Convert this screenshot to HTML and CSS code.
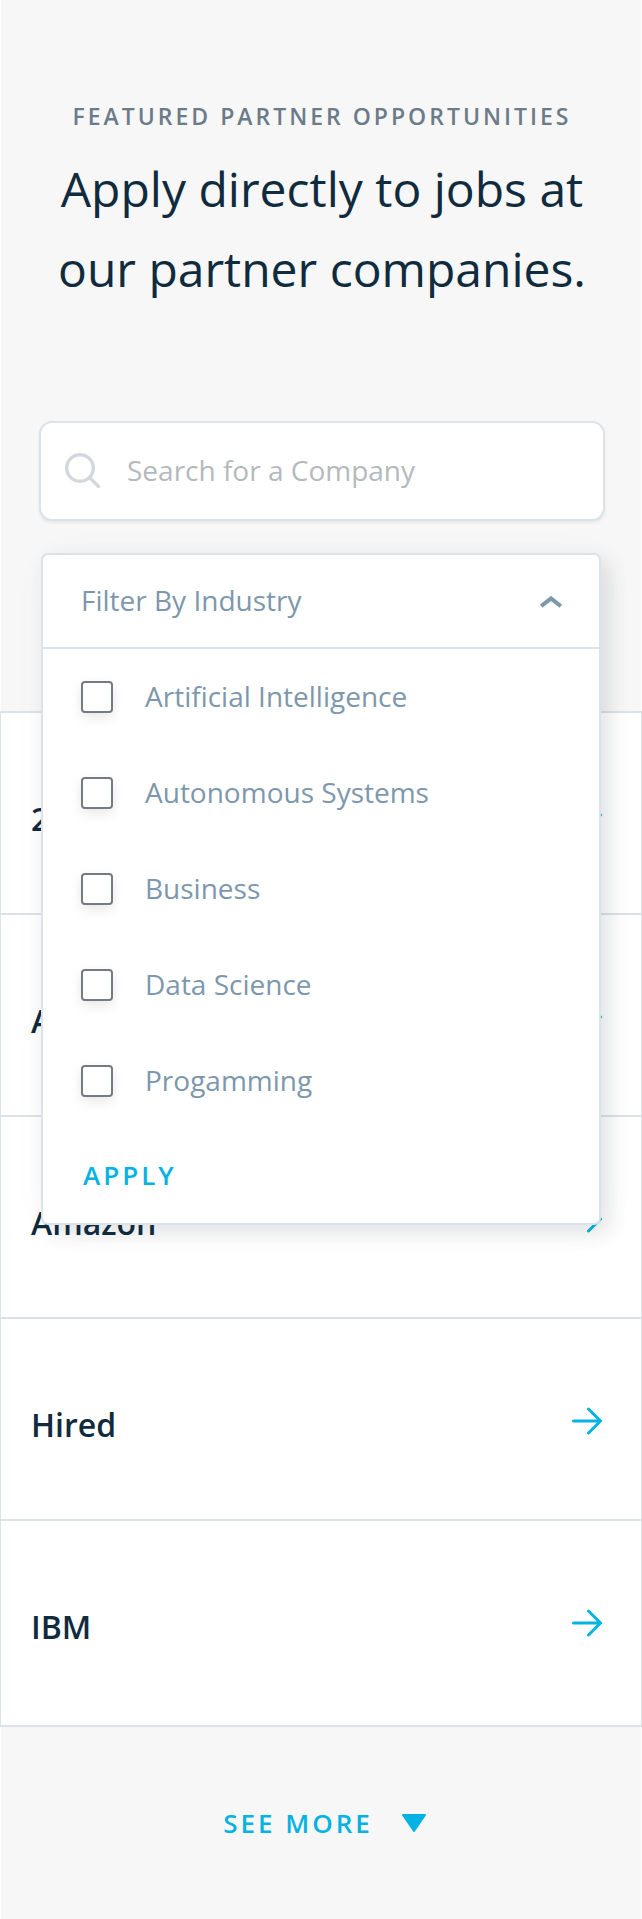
FILE: index.html
```html
<!DOCTYPE html>
<html lang="en">
<head>
<meta charset="utf-8">
<meta name="viewport" content="width=device-width, initial-scale=1">
<title>Featured Partner Opportunities</title>
<link rel="stylesheet" href="styles.css">
</head>
<body>
<svg class="sprite" aria-hidden="true">
  <symbol id="arrow" viewBox="0 0 30 28">
    <path d="M1.5 14H28M16.5 2L28.5 14L16.5 26" fill="none" stroke="currentColor" stroke-width="3" stroke-linecap="round" stroke-linejoin="round"/>
  </symbol>
</svg>
<main class="page">
  <section class="hero">
    <p class="eyebrow">Featured Partner Opportunities</p>
    <h1 class="title">Apply directly to jobs at our partner companies.</h1>
    <div class="search">
      <svg class="search-icon" viewBox="0 0 36 36" aria-hidden="true">
        <circle cx="15" cy="15" r="13.3" fill="none" stroke="currentColor" stroke-width="3.4"/>
        <path d="M25 25L33.5 33.5" fill="none" stroke="currentColor" stroke-width="3.4" stroke-linecap="round"/>
      </svg>
      <input class="search-input" type="search" placeholder="Search for a Company" aria-label="Search for a Company">
    </div>
    <div class="filter">
      <div class="filter-panel">
        <button class="filter-toggle" type="button" aria-expanded="true" aria-controls="industries">
          <span class="label">Filter By Industry</span>
          <svg class="chevron" viewBox="0 0 22 12" aria-hidden="true"><path d="M1.2 10.2L11 2.4L20.8 10.2" fill="none" stroke="currentColor" stroke-width="4"/></svg>
        </button>
        <form id="industries">
          <label class="option"><input class="box" type="checkbox"><span class="label">Artificial Intelligence</span></label>
          <label class="option"><input class="box" type="checkbox"><span class="label">Autonomous Systems</span></label>
          <label class="option"><input class="box" type="checkbox"><span class="label">Business</span></label>
          <label class="option"><input class="box" type="checkbox"><span class="label">Data Science</span></label>
          <label class="option"><input class="box" type="checkbox"><span class="label">Progamming</span></label>
          <button class="apply" type="button">Apply</button>
        </form>
      </div>
    </div>
  </section>
  <nav class="companies" aria-label="Partner companies">
    <a class="company" href="#"><span>2U</span><svg class="arrow" aria-hidden="true"><use href="#arrow"/></svg></a>
    <a class="company" href="#"><span>AT&amp;T</span><svg class="arrow" aria-hidden="true"><use href="#arrow"/></svg></a>
    <a class="company" href="#"><span>Amazon</span><svg class="arrow" aria-hidden="true"><use href="#arrow"/></svg></a>
    <a class="company" href="#"><span>Hired</span><svg class="arrow" aria-hidden="true"><use href="#arrow"/></svg></a>
    <a class="company" href="#"><span>IBM</span><svg class="arrow" aria-hidden="true"><use href="#arrow"/></svg></a>
  </nav>
  <div class="more">
    <button class="more-button" type="button">See More
      <svg class="triangle" viewBox="0 0 24 18" aria-hidden="true"><path d="M1 1H23L12 17Z" fill="currentColor" stroke="currentColor" stroke-width="2" stroke-linejoin="round"/></svg>
    </button>
  </div>
</main>
</body>
</html>
```
FILE: styles.css
```css
* { box-sizing: border-box; }

body {
  margin: 0;
  background: #fff;
  color: #0f2b3d;
  font-family: "Open Sans", "Noto Sans", sans-serif;
}

button, input { font-family: inherit; }
button { border: 0; background: none; cursor: pointer; }

.sprite { position: absolute; width: 0; height: 0; }

.page { background: #f7f7f7; }

.hero {
  padding: 100px 36px 62px 38px;
  border: solid #fff;
  border-width: 0 1px;
}

.eyebrow {
  margin: 0 0 17px;
  color: #6b7b8a;
  font-size: 23px;
  font-weight: 600;
  line-height: 32px;
  letter-spacing: 3px;
  text-align: center;
  text-transform: uppercase;
}

.title {
  max-width: 560px;
  margin: 0 auto 112px;
  font-size: 48px;
  font-weight: 400;
  line-height: 80px;
  text-align: center;
}

.search {
  display: flex;
  align-items: center;
  gap: 26px;
  height: 100px;
  padding: 0 24px;
  border: 2px solid #dbe2e8;
  border-radius: 13px;
  background: #fff;
  box-shadow: 0 2px 3px rgba(46, 61, 73, 0.08);
}

.search-icon { flex: none; width: 36px; height: 36px; color: #d2d8dd; }

.search-input {
  flex: 1;
  min-width: 0;
  padding: 0 0 2px;
  border: 0;
  outline: 0;
  background: none;
  color: #0f2b3d;
  font-size: 28px;
  line-height: 40px;
}
.search-input::placeholder { color: #b4b9bd; opacity: 1; }

.filter {
  position: relative;
  height: 96px;
  margin: 32px 4px 0 2px;
}

.filter-panel {
  position: absolute;
  z-index: 1;
  top: 0;
  right: 0;
  left: 0;
  border: 2px solid #dbe2e8;
  border-radius: 7px;
  background: #fff;
  color: #7d97ad;
  font-size: 28px;
  box-shadow: 8px 8px 20px rgba(46, 61, 73, 0.12), 4px 4px 40px rgba(46, 61, 73, 0.03);
}

.filter-toggle {
  display: flex;
  align-items: center;
  justify-content: space-between;
  width: 100%;
  height: 94px;
  padding: 0 37px 0 38px;
  border-bottom: 2px solid #dbe2e8;
  color: inherit;
  font-size: 28px;
}

.label { padding-bottom: 2px; }

.chevron { width: 22px; height: 12px; margin-top: 2px; }

.option {
  display: flex;
  align-items: center;
  gap: 32px;
  height: 96px;
  padding: 0 38px;
}

.box {
  flex: none;
  width: 32px;
  height: 32px;
  margin: 0;
  border: 2px solid #757b82;
  border-radius: 4px;
  background: #fff;
  box-shadow: 0 4px 12px rgba(0, 0, 0, 0.1);
  appearance: none;
}
.box:checked { background: #02b3e4; }

.apply {
  height: 94px;
  padding: 0 40px 2px;
  color: #02b3e4;
  font-size: 26px;
  font-weight: 600;
  letter-spacing: 3px;
  text-transform: uppercase;
}

.companies {
  border: solid #dbe2e8;
  border-width: 0 1px 2px;
  background: #fff;
}

.company {
  display: flex;
  align-items: flex-start;
  justify-content: space-between;
  height: 202px;
  padding: 84px 39px 0 30px;
  border-top: 2px solid #dbe2e8;
  color: inherit;
  font-size: 32px;
  font-weight: 600;
  line-height: 44px;
  text-decoration: none;
}
.company:last-child { height: 206px; }

.arrow { width: 30px; height: 28px; margin-top: 4px; color: #02b3e4; }

.more {
  display: flex;
  justify-content: center;
  padding: 64px 0;
  border: solid #fff;
  border-width: 0 1px;
}

.more-button {
  display: flex;
  align-items: center;
  gap: 29px;
  height: 64px;
  padding: 0 0 0 7px;
  color: #02b3e4;
  font-size: 26px;
  font-weight: 600;
  letter-spacing: 3px;
  text-transform: uppercase;
}

.triangle { width: 24px; height: 18px; }
```
